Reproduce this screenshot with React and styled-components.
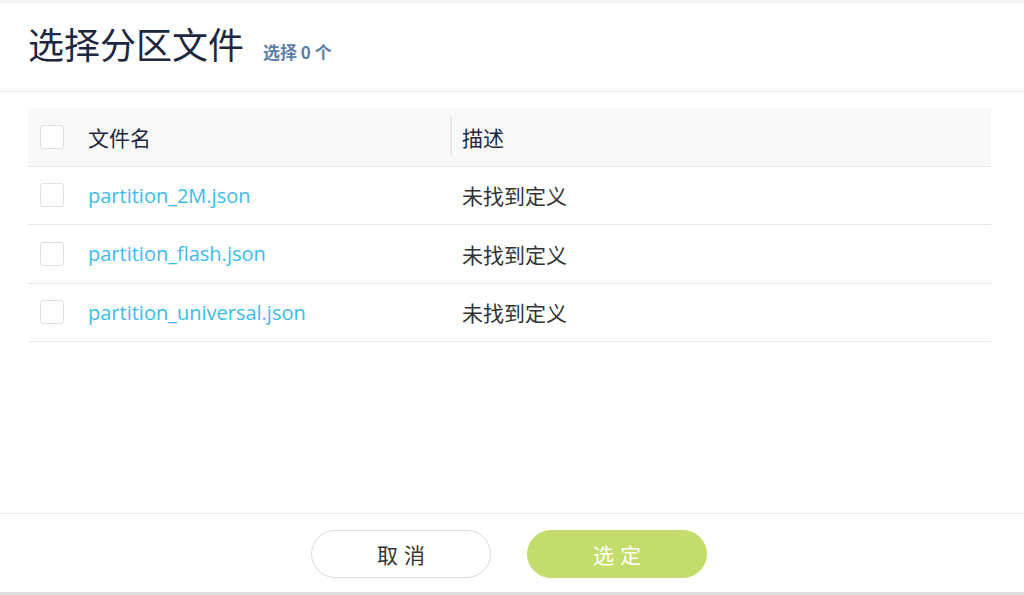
import React from "react";
import styled, { createGlobalStyle } from "styled-components";

const GlobalStyle = createGlobalStyle`
  html, body {
    margin: 0;
    padding: 0;
    background: #fff;
  }
  body {
    font-family: "Noto Sans", "Noto Sans CJK SC", sans-serif;
    color: #333;
  }
`;

const Dialog = styled.div`
  width: 1024px;
  height: 595px;
  display: flex;
  flex-direction: column;
  background: #fff;
  border-top: 3px solid #f3f3f3;
  border-bottom: 3px solid #dedede;
  box-sizing: border-box;
`;

const Header = styled.div`
  display: flex;
  align-items: baseline;
  gap: 19px;
  height: 89px;
  padding: 14px 28px 0;
  box-sizing: border-box;
  border-bottom: 1px solid #e9e9e9;
`;

const Title = styled.h1`
  margin: 0;
  font-size: 36px;
  font-weight: 400;
  color: #1d2740;
  font-family: "Noto Sans CJK SC", sans-serif;
`;

const Count = styled.span`
  font-size: 17px;
  font-weight: 700;
  color: #5b7ea6;
  font-family: "Noto Sans CJK SC", sans-serif;
`;

const Body = styled.div`
  flex: 1;
  padding: 16px 33px 0 28px;
`;

const Table = styled.div`
  display: flex;
  flex-direction: column;
`;

const Row = styled.div`
  display: grid;
  grid-template-columns: 60px 362px 1fr;
  align-items: center;
  height: 58.5px;
  box-sizing: border-box;
  border-bottom: 1px solid #e8e8e8;
  background: ${(p) => (p.$head ? "#f9f9f9" : "#fff")};
`;

const Check = styled.span`
  width: 22px;
  height: 22px;
  margin-left: 12px;
  border: 1px solid #e0e0e0;
  border-radius: 3px;
  background: #fff;
`;

const Cell = styled.div`
  font-size: ${(p) => (p.$link ? "20px" : "21px")};
  color: ${(p) => (p.$link ? "#3dbbee" : p.$head ? "#1d2740" : "#333")};
  font-family: ${(p) =>
    p.$link ? '"Open Sans", "Noto Sans CJK SC", sans-serif' : '"Noto Sans CJK SC", sans-serif'};
  white-space: nowrap;
`;

const DescHead = styled(Cell)`
  position: relative;
  padding-left: 12px;
  &::before {
    content: "";
    position: absolute;
    left: 0;
    top: -5px;
    bottom: -5px;
    width: 2px;
    background: #eaeaea;
  }
`;

const Desc = styled(Cell)`
  padding-left: 12px;
`;

const Footer = styled.div`
  display: flex;
  justify-content: center;
  align-items: center;
  gap: 36px;
  height: 79px;
  border-top: 1px solid #e8e8e8;
  padding-right: 6px;
  padding-top: 2px;
  box-sizing: border-box;
`;

const Button = styled.button`
  width: 180px;
  height: 48px;
  border-radius: 24px;
  font-size: 21px;
  font-family: "Noto Sans CJK SC", sans-serif;
  letter-spacing: 6px;
  text-indent: 6px;
  cursor: pointer;
  border: 1px solid ${(p) => (p.$primary ? "#c3dc6b" : "#dcdcdc")};
  background: ${(p) => (p.$primary ? "#c3dc6b" : "#fff")};
  color: ${(p) => (p.$primary ? "#fff" : "#333")};
`;

const files = [
  "partition_2M.json",
  "partition_flash.json",
  "partition_universal.json",
];

export default function App() {
  return (
    <>
      <GlobalStyle />
      <Dialog>
        <Header>
          <Title>选择分区文件</Title>
          <Count>选择 0 个</Count>
        </Header>
        <Body>
          <Table>
            <Row $head>
              <Check />
              <Cell $head>文件名</Cell>
              <DescHead $head>描述</DescHead>
            </Row>
            {files.map((f) => (
              <Row key={f}>
                <Check />
                <Cell $link>{f}</Cell>
                <Desc>未找到定义</Desc>
              </Row>
            ))}
          </Table>
        </Body>
        <Footer>
          <Button>取消</Button>
          <Button $primary>选定</Button>
        </Footer>
      </Dialog>
    </>
  );
}
